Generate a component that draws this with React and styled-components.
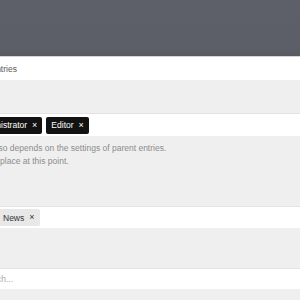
import styled, { createGlobalStyle } from 'styled-components';

const GlobalStyle = createGlobalStyle`
  html, body {
    margin: 0;
    padding: 0;
    background: #efefef;
    overflow: hidden;
  }
  body {
    font-family: "Liberation Sans", Arial, sans-serif;
    font-size: 8.5px;
    color: #555;
  }
`;

const Page = styled.div`
  width: 350px;
  margin-left: -50px;
  display: flex;
  flex-direction: column;
  min-height: 300px;
`;

const Header = styled.header`
  height: 56px;
  background: linear-gradient(#5d6068, #5c5f67 85%, #56595f);
  border-bottom: 1px solid #d4d4d4;
`;

const Field = styled.div`
  box-sizing: border-box;
  display: flex;
  align-items: center;
  gap: 4px;
  height: ${(p) => p.$h}px;
  margin-top: ${(p) => p.$top || 0}px;
  padding-left: ${(p) => p.$inset}px;
  background: #fff;
  border-top: ${(p) => (p.$flush ? 'none' : '1px solid #e3e3e3')};
  white-space: nowrap;
`;

const Label = styled.span`
  color: #5a5a5a;
`;

const Placeholder = styled.span`
  color: #a8a8a8;
`;

const Tag = styled.span`
  display: inline-flex;
  align-items: center;
  gap: 5px;
  height: 17px;
  padding: 0 5px;
  border-radius: 2px;
  background: ${(p) => (p.$dark ? '#121212' : '#e8e8e8')};
  color: ${(p) => (p.$dark ? '#fff' : '#333')};
`;

const Remove = styled.span`
  font-size: 9px;
  line-height: 1;
`;

const Note = styled.div`
  padding: 6px 0 0 9px;
  color: #8c8c8c;
  line-height: 13px;
  white-space: nowrap;
  span {
    display: block;
  }
`;

const App = () => {
  return (
    <>
      <GlobalStyle />
      <Page>
        <Header />
        <Field $h={23} $inset={14} $flush>
          <Label>Parent entries</Label>
        </Field>
        <Field $h={23} $inset={22} $top={33}>
          <Tag $dark>
            Administrator <Remove>×</Remove>
          </Tag>
          <Tag $dark>
            Editor <Remove>×</Remove>
          </Tag>
        </Field>
        <Note>
          <span>Visibility also depends on the settings of parent entries.</span>
          <span>This takes place at this point.</span>
        </Note>
        <Field $h={22} $inset={48} $top={38}>
          <Tag>
            News <Remove>×</Remove>
          </Tag>
        </Field>
        <Field $h={21} $inset={29} $top={40}>
          <Placeholder>Search...</Placeholder>
        </Field>
      </Page>
    </>
  );
};

export default App;
